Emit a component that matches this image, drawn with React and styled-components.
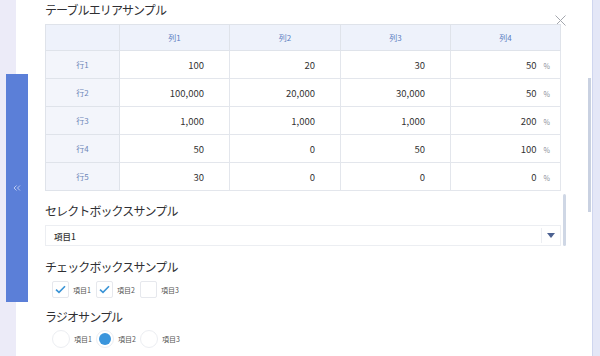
import React from 'react'
import styled, { createGlobalStyle } from 'styled-components'

const GlobalStyle = createGlobalStyle`
  html, body {
    margin: 0;
    padding: 0;
    background: #ecebf8;
    font-family: "Noto Sans CJK JP", "Noto Sans", sans-serif;
    color: #333;
  }
`

const columns = ['列1', '列2', '列3', '列4']

const rows = [
  { label: '行1', values: ['100', '20', '30', '50'] },
  { label: '行2', values: ['100,000', '20,000', '30,000', '50'] },
  { label: '行3', values: ['1,000', '1,000', '1,000', '200'] },
  { label: '行4', values: ['50', '0', '50', '100'] },
  { label: '行5', values: ['30', '0', '0', '0'] }
]

const options = [
  { label: '項目1', checked: true },
  { label: '項目2', checked: true },
  { label: '項目3', checked: false }
]

const radios = [
  { label: '項目1', checked: false },
  { label: '項目2', checked: true },
  { label: '項目3', checked: false }
]

function CheckIcon () {
  return (
    <svg width='11' height='9' viewBox='0 0 11 9'>
      <path d='M1 4.6 L4 7.4 L10 1.2' fill='none' stroke='#3a94d6' strokeWidth='1.6' />
    </svg>
  )
}

function App () {
  return (
    <>
      <GlobalStyle />
      <Page>
        <LeftRail />
        <DrawerTab>
          <svg width='8' height='6' viewBox='0 0 8 6'>
            <path d='M3.5 0.5 L1 3 L3.5 5.5 M7 0.5 L4.5 3 L7 5.5' fill='none' stroke='#c6d3f4' strokeWidth='0.9' />
          </svg>
        </DrawerTab>

        <Panel>
          <Content>
            <TitleRow>
              <SectionTitle>テーブルエリアサンプル</SectionTitle>
              <CloseButton>
                <svg width='11' height='11' viewBox='0 0 11 11'>
                  <path d='M0.5 0.5 L10.5 10.5 M10.5 0.5 L0.5 10.5' stroke='#a4a7ae' strokeWidth='1' />
                </svg>
              </CloseButton>
            </TitleRow>

            <DataTable>
              <colgroup>
                <col style={{ width: 74 }} />
                <col style={{ width: 110 }} />
                <col style={{ width: 111 }} />
                <col style={{ width: 110 }} />
                <col style={{ width: 110 }} />
              </colgroup>
              <thead>
                <tr>
                  <HeadCell />
                  {columns.map(c => <HeadCell key={c}>{c}</HeadCell>)}
                </tr>
              </thead>
              <tbody>
                {rows.map(r => (
                  <tr key={r.label}>
                    <RowLabel>{r.label}</RowLabel>
                    {r.values.map((v, i) => (
                      <NumCell key={i} percent={i === 3}>
                        {v}
                        {i === 3 && <Unit>%</Unit>}
                      </NumCell>
                    ))}
                  </tr>
                ))}
              </tbody>
            </DataTable>

            <FormArea>
              <FormBody>
                <FieldLabel>セレクトボックスサンプル</FieldLabel>
                <SelectBox>
                  <SelectValue>項目1</SelectValue>
                  <SelectArrow>
                    <svg width='8' height='5' viewBox='0 0 8 5'>
                      <path d='M0 0 L8 0 L4 5 Z' fill='#4c6191' />
                    </svg>
                  </SelectArrow>
                </SelectBox>

                <FieldLabel gap={11}>チェックボックスサンプル</FieldLabel>
                <OptionRow>
                  {options.map(o => (
                    <Option key={o.label}>
                      <CheckBox>{o.checked && <CheckIcon />}</CheckBox>
                      <OptionText>{o.label}</OptionText>
                    </Option>
                  ))}
                </OptionRow>

                <FieldLabel gap={9}>ラジオサンプル</FieldLabel>
                <OptionRow radio>
                  {radios.map(o => (
                    <Option key={o.label}>
                      <Radio>{o.checked && <RadioDot />}</Radio>
                      <OptionText>{o.label}</OptionText>
                    </Option>
                  ))}
                </OptionRow>
              </FormBody>
              <InnerTrack>
                <InnerThumb />
              </InnerTrack>
            </FormArea>
          </Content>

          <PanelTrack>
            <PanelThumb />
          </PanelTrack>
        </Panel>

        <RightRail />
      </Page>
    </>
  )
}

const Page = styled.div`
  position: relative;
  display: flex;
  width: 600px;
  height: 356px;
  overflow: hidden;
`

const LeftRail = styled.div`
  flex: 0 0 16px;
  background: #ecebf8;
`

const DrawerTab = styled.div`
  position: absolute;
  left: 6px;
  top: 74px;
  width: 22px;
  height: 228px;
  background: #5b7fd8;
  display: flex;
  align-items: center;
  justify-content: center;
`

const Panel = styled.div`
  flex: 0 0 576px;
  display: flex;
  background: #fff;
`

const Content = styled.div`
  flex: 0 0 522px;
  padding-left: 29px;
  display: flex;
  flex-direction: column;
`

const TitleRow = styled.div`
  display: flex;
  justify-content: space-between;
  align-items: flex-start;
  height: 24px;
`

const SectionTitle = styled.div`
  font-size: 12px;
  line-height: 20px;
  letter-spacing: -0.9px;
  color: #2f2f33;
`

const CloseButton = styled.div`
  margin-top: 15px;
  margin-right: 1px;
  width: 11px;
  height: 11px;
  display: flex;
`

const DataTable = styled.table`
  width: 515px;
  border-collapse: collapse;
  table-layout: fixed;
  border: 1px solid #dfe3ea;
`

const HeadCell = styled.th`
  height: 25px;
  padding: 0;
  background: #eef2fb;
  border: 1px solid #dfe3ea;
  color: #5a7dc2;
  font-size: 8px;
  font-weight: 400;
  text-align: center;
`

const RowLabel = styled.td`
  height: 27px;
  padding: 0;
  background: #f3f5fb;
  border: 1px solid #dfe3ea;
  color: #6d86b8;
  font-size: 8px;
  text-align: center;
`

const NumCell = styled.td`
  height: 27px;
  padding: 0 ${p => (p.percent ? '10px' : '25px')} 0 0;
  border: 1px solid #e3e6ec;
  font-size: 9.5px;
  color: #333;
  text-align: right;
`

const Unit = styled.span`
  display: inline-block;
  margin-left: 7px;
  font-size: 7px;
  color: #8b8f99;
`

const FormArea = styled.div`
  display: flex;
`

const FormBody = styled.div`
  flex: 0 0 516px;
  display: flex;
  flex-direction: column;
`

const InnerTrack = styled.div`
  flex: 1;
  display: flex;
  justify-content: center;
`

const InnerThumb = styled.div`
  width: 3px;
  height: 52px;
  margin-top: 3px;
  margin-left: 1px;
  border-radius: 2px;
  background: #cfd7e5;
`

const FieldLabel = styled.div`
  margin-top: ${p => p.gap || 10}px;
  font-size: 12px;
  line-height: 20px;
  letter-spacing: -0.9px;
  color: #2f2f33;
`

const SelectBox = styled.div`
  margin-top: 4px;
  height: 21px;
  box-sizing: border-box;
  border: 1px solid #eceef2;
  display: flex;
  align-items: center;
`

const SelectValue = styled.div`
  flex: 1;
  padding-left: 8px;
  font-size: 8.5px;
  font-weight: 500;
  color: #333;
`

const SelectArrow = styled.div`
  width: 18px;
  height: 15px;
  border-left: 1px solid #eceef2;
  display: flex;
  align-items: center;
  justify-content: center;
`

const OptionRow = styled.div`
  margin-top: ${p => (p.radio ? '3px' : '4px')};
  padding-left: 7px;
  display: flex;
  gap: 8px;
`

const Option = styled.div`
  display: flex;
  align-items: center;
  width: 36px;
  gap: 4px;
`

const CheckBox = styled.div`
  flex: 0 0 17px;
  height: 17px;
  box-sizing: border-box;
  border: 1px solid #e6e8ed;
  border-radius: 2px;
  display: flex;
  align-items: center;
  justify-content: center;
`

const Radio = styled.div`
  flex: 0 0 18px;
  height: 18px;
  box-sizing: border-box;
  border: 1px solid #eceef2;
  border-radius: 50%;
  display: flex;
  align-items: center;
  justify-content: center;
`

const RadioDot = styled.div`
  width: 12px;
  height: 12px;
  border-radius: 50%;
  background: #3a95dc;
`

const OptionText = styled.span`
  font-size: 7px;
  color: #555;
  white-space: nowrap;
`

const PanelTrack = styled.div`
  flex: 1;
  display: flex;
  justify-content: flex-end;
  padding-right: 1px;
`

const PanelThumb = styled.div`
  width: 3px;
  height: 134px;
  margin-top: 78px;
  background: #c9d1e1;
`

const RightRail = styled.div`
  flex: 1;
  background: #e4e7f7;
  border-left: 1px solid #cfd6ef;
`

export default App
